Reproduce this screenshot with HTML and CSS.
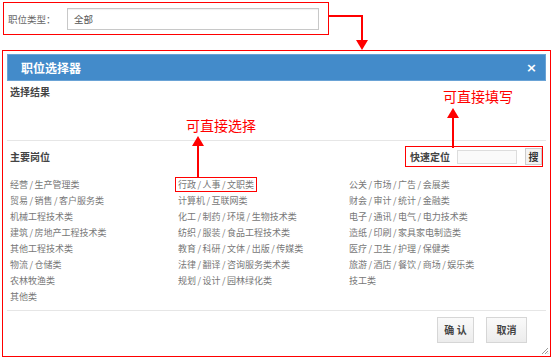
FILE: index.html
```html
<!DOCTYPE html>
<html lang="zh-CN">
<head>
<meta charset="utf-8">
<title>职位选择器</title>
<link rel="stylesheet" href="styles.css">
</head>
<body>
<div class="page">
  <div class="top-box">
    <span class="top-label">职位类型：</span>
    <div class="top-input">全部</div>
  </div>

  <div class="modal">
    <div class="modal-head">
      <span class="modal-title">职位选择器</span>
      <span class="modal-close">×</span>
    </div>
    <div class="result">
      <div class="label">选择结果</div>
    </div>
    <div class="section-head">
      <div class="label">主要岗位</div>
      <div class="search">
        <span class="label">快速定位</span>
        <span class="search-input"></span>
        <span class="search-btn">搜</span>
      </div>
    </div>
    <div class="list">
      <span class="item">经营<i>/</i>生产管理类</span>
      <span class="item hl">行政<i>/</i>人事<i>/</i>文职类</span>
      <span class="item">公关<i>/</i>市场<i>/</i>广告<i>/</i>会展类</span>
      <span class="item">贸易<i>/</i>销售<i>/</i>客户服务类</span>
      <span class="item">计算机<i>/</i>互联网类</span>
      <span class="item">财会<i>/</i>审计<i>/</i>统计<i>/</i>金融类</span>
      <span class="item">机械工程技术类</span>
      <span class="item">化工<i>/</i>制药<i>/</i>环境<i>/</i>生物技术类</span>
      <span class="item">电子<i>/</i>通讯<i>/</i>电气<i>/</i>电力技术类</span>
      <span class="item">建筑<i>/</i>房地产工程技术类</span>
      <span class="item">纺织<i>/</i>服装<i>/</i>食品工程技术类</span>
      <span class="item">造纸<i>/</i>印刷<i>/</i>家具家电制造类</span>
      <span class="item">其他工程技术类</span>
      <span class="item">教育<i>/</i>科研<i>/</i>文体<i>/</i>出版<i>/</i>传媒类</span>
      <span class="item">医疗<i>/</i>卫生<i>/</i>护理<i>/</i>保健类</span>
      <span class="item">物流<i>/</i>仓储类</span>
      <span class="item">法律<i>/</i>翻译<i>/</i>咨询服务类术类</span>
      <span class="item">旅游<i>/</i>酒店<i>/</i>餐饮<i>/</i>商场<i>/</i>娱乐类</span>
      <span class="item">农林牧渔类</span>
      <span class="item">规划<i>/</i>设计<i>/</i>园林绿化类</span>
      <span class="item">技工类</span>
      <span class="item">其他类</span>
    </div>
    <div class="footer">
      <span class="btn btn-ok">确 认</span>
      <span class="btn btn-cancel">取消</span>
    </div>
    <svg class="grip" width="8" height="8" viewBox="0 0 8 8">
      <path d="M7 1 L1 7 M7 4 L4 7 M7 6.5 L6.5 7" stroke="#999" stroke-width="1"/>
    </svg>
  </div>

  <div class="note note-fill">可直接填写</div>
  <div class="note note-pick">可直接选择</div>

  <svg class="arrows" width="555" height="360" viewBox="0 0 555 360">
    <polyline points="328,16 362,16 362,42" fill="none" stroke="#f00" stroke-width="2"/>
    <polygon points="356,40 368,40 362,50" fill="#f00"/>
    <line x1="453" y1="148" x2="453" y2="116" stroke="#f00" stroke-width="2"/>
    <polygon points="447,118 459,118 453,108" fill="#f00"/>
    <line x1="198" y1="177" x2="198" y2="144" stroke="#f00" stroke-width="2"/>
    <polygon points="192,146 204,146 198,136" fill="#f00"/>
  </svg>
</div>
</body>
</html>
```

FILE: styles.css
```css
* { box-sizing: border-box; }

html, body {
  margin: 0;
  padding: 0;
  background: #fff;
}

body {
  font-family: "Noto Sans CJK SC", "Noto Sans", sans-serif;
  font-size: 10px;
  color: #333;
}

.page {
  position: relative;
  width: 555px;
  height: 360px;
  padding: 2px 0 0 2px;
}

.top-box {
  margin-left: 1px;
  width: 326px;
  height: 33px;
  border: 1px solid #f00;
  display: flex;
  align-items: center;
  padding-left: 4px;
}

.top-label {
  width: 59px;
  color: #666;
  font-size: 9.5px;
}

.top-input {
  width: 252px;
  height: 22px;
  border: 1px solid #c8c8c8;
  box-shadow: inset 0 1px 1px rgba(0,0,0,0.06);
  padding-left: 6px;
  line-height: 20px;
  color: #555;
  font-size: 9.5px;
}

.modal {
  position: relative;
  margin-top: 15px;
  width: 549px;
  height: 307px;
  border: 1px solid #f00;
  padding: 3px 4px 0 4px;
}

.modal-head {
  height: 27px;
  background: #438bca;
  border: 1px solid #6aa3d6;
  display: flex;
  align-items: center;
  justify-content: space-between;
  padding: 0 8px 0 13px;
  color: #fff;
  font-weight: bold;
}

.modal-title {
  font-size: 12px;
}

.modal-close {
  font-size: 13px;
  font-family: "DejaVu Sans", sans-serif;
  line-height: 1;
}

.label {
  font-weight: bold;
  color: #444;
  font-size: 10px;
}

.result {
  height: 60px;
  padding: 4px 0 0 3px;
  border-bottom: 1px solid #e6e6e6;
  line-height: 14px;
}

.section-head {
  display: flex;
  align-items: center;
  justify-content: space-between;
  padding: 5px 3px 0 3px;
}

.search {
  width: 138px;
  height: 21px;
  border: 1px solid #f00;
  display: flex;
  align-items: center;
  padding-left: 4px;
}

.search-input {
  margin-left: 7px;
  width: 60px;
  height: 14px;
  border: 1px solid #ddd;
  background: #fafafa;
}

.search-btn {
  margin-left: 8px;
  width: 17px;
  height: 17px;
  border: 1px solid #ccc;
  background: #f3f3f3;
  font-weight: bold;
  font-size: 10px;
  line-height: 15px;
  text-align: center;
  color: #333;
}

.list {
  margin-top: 10px;
  display: grid;
  grid-template-columns: 168px 171px 1fr;
  grid-auto-rows: 16px;
  height: 134px;
  border-bottom: 1px solid #e6e6e6;
}

.item {
  justify-self: start;
  height: 15px;
  border: 1px solid transparent;
  padding: 0 2px;
  font-size: 9px;
  line-height: 13px;
  color: #777;
  white-space: nowrap;
}

.item i {
  font-style: normal;
  padding: 0 1.5px;
}

.item.hl {
  border-color: #f00;
}

.footer {
  display: flex;
  justify-content: flex-end;
  gap: 12px;
  padding: 6px 19px 0 0;
}

.btn {
  height: 26px;
  border: 1px solid #d6d6d6;
  background: linear-gradient(#fafafa, #ececec);
  font-size: 10px;
  font-weight: bold;
  line-height: 24px;
  text-align: center;
  color: #444;
}

.btn-ok { width: 37px; }
.btn-cancel { width: 41px; }

.grip {
  position: absolute;
  right: 1px;
  bottom: 1px;
}

.note {
  position: absolute;
  color: #f00;
  font-size: 14px;
  line-height: 18px;
  white-space: nowrap;
}

.note-fill { left: 443px; top: 87px; }
.note-pick { left: 186px; top: 116px; }

.arrows {
  position: absolute;
  left: 0;
  top: 0;
  pointer-events: none;
}
```
